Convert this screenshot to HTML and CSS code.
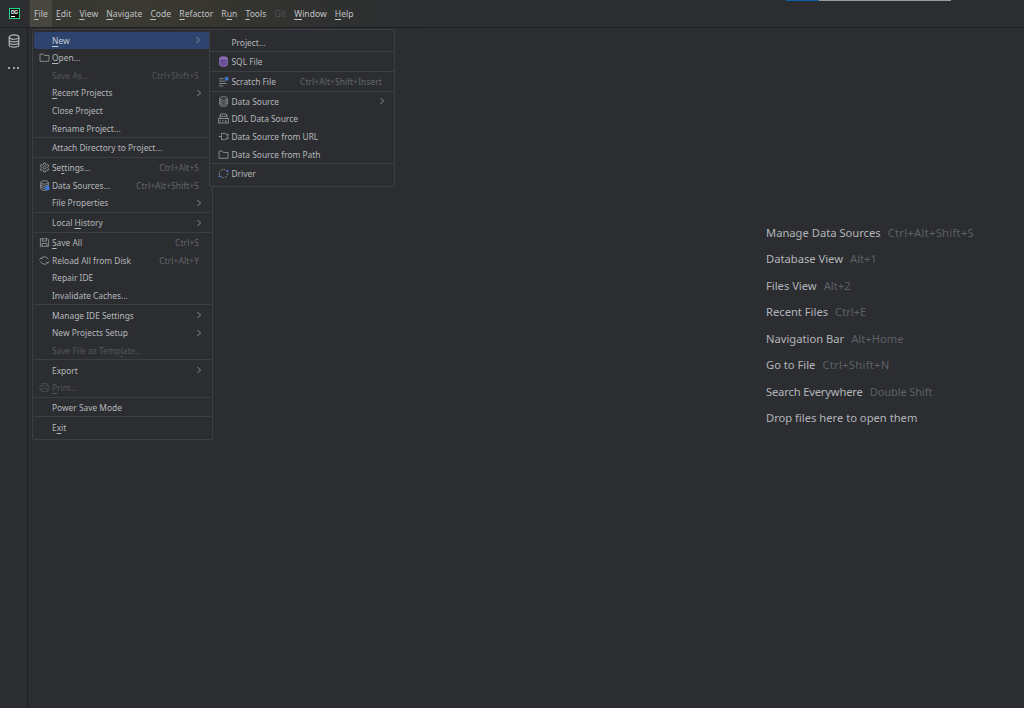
FILE: index.html
```html
<!DOCTYPE html>
<html lang="en">
<head>
<meta charset="utf-8">
<title>DataGrip</title>
<link rel="stylesheet" href="styles.css">
</head>
<body>
<div class="app">
  <header class="topbar">
    <div class="logo-cell"><div class="logo"><span class="logo-text">DG</span><span class="logo-bar"></span></div></div>
    <nav class="menubar">
      <span class="top-item active"><u>F</u>ile</span>
      <span class="top-item"><u>E</u>dit</span>
      <span class="top-item"><u>V</u>iew</span>
      <span class="top-item"><u>N</u>avigate</span>
      <span class="top-item"><u>C</u>ode</span>
      <span class="top-item"><u>R</u>efactor</span>
      <span class="top-item">R<u>u</u>n</span>
      <span class="top-item"><u>T</u>ools</span>
      <span class="top-item dim">Git</span>
      <span class="top-item"><u>W</u>indow</span>
      <span class="top-item"><u>H</u>elp</span>
    </nav>
  </header>
  <div class="body">
    <aside class="sidebar">
      <svg class="side-icon" viewBox="0 0 16 16" width="14" height="14"><use href="#db"/></svg>
      <div class="dots"><i></i><i></i><i></i></div>
    </aside>
    <main class="editor">
      <ul class="hints">
        <li>Manage Data Sources<span class="wide">Ctrl+Alt+Shift+S</span></li>
        <li>Database View<span>Alt+1</span></li>
        <li>Files View<span>Alt+2</span></li>
        <li>Recent Files<span>Ctrl+E</span></li>
        <li>Navigation Bar<span>Alt+Home</span></li>
        <li>Go to File<span class="wide">Ctrl+Shift+N</span></li>
        <li class="tight">Search Everywhere<span>Double Shift</span></li>
        <li>Drop files here to open them</li>
      </ul>
    </main>
  </div>

  <div class="menu file-menu">
    <div class="row selected"><span class="label"><u>N</u>ew</span><svg class="arrow" viewBox="0 0 6 8"><path d="M1.5 1 4.5 4 1.5 7"/></svg></div>
    <div class="row"><svg class="ico" viewBox="0 0 16 16"><use href="#folder"/></svg><span class="label"><u>O</u>pen...</span></div>
    <div class="row off"><span class="label">Save As...</span><span class="key">Ctrl+Shift+S</span></div>
    <div class="row"><span class="label"><u>R</u>ecent Projects</span><svg class="arrow" viewBox="0 0 6 8"><path d="M1.5 1 4.5 4 1.5 7"/></svg></div>
    <div class="row"><span class="label">Close Project</span></div>
    <div class="row"><span class="label">Rename Project...</span></div>
    <hr>
    <div class="row"><span class="label">Attach Directory to Project...</span></div>
    <hr>
    <div class="row"><svg class="ico" viewBox="0 0 16 16"><circle cx="8" cy="8" r="2.2"/><path d="M6.8 1.5h2.4l.4 2 1.6.9 1.9-.7 1.2 2.1-1.5 1.3v1.8l1.5 1.3-1.2 2.1-1.9-.7-1.6.9-.4 2H6.8l-.4-2-1.6-.9-1.9.7-1.2-2.1 1.5-1.3V7.1L1.7 5.8l1.2-2.1 1.9.7 1.6-.9z"/></svg><span class="label">Se<u>t</u>tings...</span><span class="key">Ctrl+Alt+S</span></div>
    <div class="row"><svg class="ico" viewBox="0 0 16 16"><use href="#db"/><circle class="fill-blue" cx="12" cy="12" r="3.5"/></svg><span class="label">Data Sources...</span><span class="key">Ctrl+Alt+Shift+S</span></div>
    <div class="row"><span class="label">File Properties</span><svg class="arrow" viewBox="0 0 6 8"><path d="M1.5 1 4.5 4 1.5 7"/></svg></div>
    <hr>
    <div class="row"><span class="label">Local <u>H</u>istory</span><svg class="arrow" viewBox="0 0 6 8"><path d="M1.5 1 4.5 4 1.5 7"/></svg></div>
    <hr>
    <div class="row"><svg class="ico" viewBox="0 0 16 16"><path d="M2 2.5h10.5l1.5 1.5v9.5H2z"/><path d="M5 2.5v3.5h6V2.5M4.5 13.5V9.5h7v4"/></svg><span class="label"><u>S</u>ave All</span><span class="key">Ctrl+S</span></div>
    <div class="row"><svg class="ico" viewBox="0 0 16 16"><path d="M13.5 6.5A6 6 0 0 0 3 5M2.500 9.500A6 6 0 0 0 13 11"/><path d="M.5 7l2.200-2.500L5.500 6M15.500 9l-2.200 2.500L10.500 10"/></svg><span class="label">Reload All from Disk</span><span class="key">Ctrl+Alt+Y</span></div>
    <div class="row"><span class="label">Repair IDE</span></div>
    <div class="row"><span class="label">Invalidate Caches...</span></div>
    <hr>
    <div class="row"><span class="label">Manage IDE Settings</span><svg class="arrow" viewBox="0 0 6 8"><path d="M1.5 1 4.5 4 1.5 7"/></svg></div>
    <div class="row"><span class="label">New Projects Setup</span><svg class="arrow" viewBox="0 0 6 8"><path d="M1.5 1 4.5 4 1.5 7"/></svg></div>
    <div class="row off"><span class="label">Save File as Temp<u>l</u>ate...</span></div>
    <hr>
    <div class="row"><span class="label">Export</span><svg class="arrow" viewBox="0 0 6 8"><path d="M1.5 1 4.5 4 1.5 7"/></svg></div>
    <div class="row off"><svg class="ico" viewBox="0 0 16 16"><path d="M4 5.500V2h8v3.500M4 12H1.500V5.500h13V12H12M4 9.500h8V14H4z"/></svg><span class="label"><u>P</u>rint...</span></div>
    <hr>
    <div class="row"><span class="label">Power Save Mode</span></div>
    <hr>
    <div class="row"><span class="label">E<u>x</u>it</span></div>
  </div>

  <div class="menu new-menu">
    <div class="row"><span class="label">Project...</span></div>
    <hr>
    <div class="row"><svg class="ico purple" viewBox="0 0 16 16"><use href="#db-fill"/></svg><span class="label">SQL File</span></div>
    <hr>
    <div class="row"><svg class="ico" viewBox="0 0 16 16"><path d="M1.500 4h7M1.500 7.500h9M1.500 11h11M1.500 14.500h6"/><circle class="fill-blue" cx="12.500" cy="4" r="3"/></svg><span class="label">Scratch File</span><span class="key">Ctrl+Alt+Shift+Insert</span></div>
    <hr>
    <div class="row"><svg class="ico" viewBox="0 0 16 16"><use href="#db"/></svg><span class="label">Data Source</span><svg class="arrow" viewBox="0 0 6 8"><path d="M1.5 1 4.5 4 1.5 7"/></svg></div>
    <div class="row"><svg class="ico" viewBox="0 0 16 16"><ellipse cx="8" cy="3" rx="5" ry="2"/><path d="M3 3v5M13 3v5M.5 8h15v6.500H.5zM3 10v2.500M7 10v2.500M11 10v2.500h2"/></svg><span class="label">DDL Data Source</span></div>
    <div class="row"><svg class="ico" viewBox="0 0 16 16"><path d="M5 3.500h4.500a4.500 4.500 0 0 1 0 9H5zM1 8h4M13.500 5.500H16M13.500 10.500H16"/></svg><span class="label">Data Source from URL</span></div>
    <div class="row"><svg class="ico" viewBox="0 0 16 16"><use href="#folder"/></svg><span class="label">Data Source from Path</span></div>
    <hr>
    <div class="row"><svg class="ico" viewBox="0 0 16 16"><circle class="dash" cx="8" cy="8" r="6"/><circle class="fill-blue" cx="2" cy="12" r="1.500"/><circle class="fill-blue" cx="14" cy="4" r="1.500"/></svg><span class="label">Driver</span></div>
  </div>

  <div class="top-strip"><i></i></div>

  <svg class="defs" width="0" height="0">
    <defs>
      <g id="db"><ellipse cx="8" cy="3.500" rx="5.500" ry="2.500"/><path d="M2.500 3.500v9c0 1.400 2.500 2.500 5.500 2.500s5.500-1.100 5.500-2.500v-9M2.500 6.500c0 1.400 2.500 2.500 5.500 2.500s5.500-1.100 5.500-2.500M2.500 9.500c0 1.400 2.500 2.500 5.500 2.500s5.500-1.100 5.500-2.500"/></g>
      <g id="db-fill"><ellipse cx="8" cy="3.500" rx="5.500" ry="2.500"/><path d="M2.500 3.500v9c0 1.400 2.500 2.500 5.500 2.500s5.500-1.100 5.500-2.500v-9z"/></g>
      <path id="folder" d="M1.500 3h4.500l1.800 2h6.700v8.500h-13z"/>
    </defs>
  </svg>
</div>
</body>
</html>
```
FILE: styles.css
```css
* { box-sizing: border-box; }
html, body { margin: 0; height: 100%; }
body { background: #2b2d30; overflow: hidden; font-family: "Noto Sans", "Open Sans", sans-serif; }
.app { position: relative; width: 1024px; height: 708px; display: flex; flex-direction: column; color: #bcbec4; }

.topbar { height: 28px; display: flex; background: linear-gradient(90deg, #34352f 0, #3a3a33 12%, #37362f 20%, #2f3030 32%, #2b2d30 45%); border-bottom: 1px solid #1e1f22; }
.logo-cell { width: 29px; display: flex; align-items: center; justify-content: center; background: #2b2d30; }
.logo { width: 11px; height: 11px; margin-top: -1px; background: #0c0c0c; border: 1px solid #21d789; display: flex; flex-direction: column; padding: 1px 1px 0; }
.logo-text { font: 700 5px/5px "Liberation Sans", sans-serif; color: #fff; letter-spacing: -.3px; }
.logo-bar { width: 4px; height: 1px; background: #fff; margin-top: 1px; }
.menubar { display: flex; font-size: 8.600px; line-height: 26px; margin-left: 1px; }
.top-item { padding: 1px 4.050px 0; white-space: nowrap; color: #c0c2c6; }
.top-item.active { background: #47473f; }
.top-item.dim { color: #55575b; }

.body { flex: 1; display: flex; min-height: 0; }
.sidebar { width: 28px; border-right: 1px solid #1e1f22; display: flex; flex-direction: column; align-items: center; padding-top: 6px; gap: 19px; }
.side-icon { fill: none; stroke: #b4b6bb; stroke-width: 1.300; }
.dots { display: flex; gap: 2.500px; }
.dots i { width: 2px; height: 2px; border-radius: 50%; background: #c5c7cb; }

.editor { flex: 1; padding: 192px 0 0 738px; }
.hints { list-style: none; margin: 0; padding: 0; font-size: 11.200px; line-height: 26.450px; color: #b3b5ba; white-space: nowrap; }
.hints span { margin-left: 7px; color: #5d6066; }
.hints .wide { letter-spacing: .28px; }
.hints .tight { letter-spacing: -.17px; }

.menu { position: absolute; background: #2b2d30; border: 1px solid #3c3e43; border-radius: 2px; font-size: 8.400px; line-height: 17.600px; color: #b6b8bd; }
.file-menu { left: 32px; top: 29px; width: 181px; height: 411px; padding: 1.700px 1px; }
.new-menu { left: 209px; top: 29px; width: 186px; height: 158px; padding: 3.500px 0 0; }
.menu hr { border: 0; border-top: 1px solid #3c3e43; height: 2.200px; margin: 0; }
.row { position: relative; height: 17.600px; padding: 0 12px 0 18px; display: flex; justify-content: space-between; white-space: nowrap; }
.new-menu .row { padding-left: 21.500px; }
.row.selected { background: #2e436e; border-radius: 3px; color: #c8cbd2; margin-right: 1px; }
.row.off, .row.off .key { color: #55575c; }
.key { color: #64676d; margin-left: auto; letter-spacing: .1px; }
.arrow { width: 6px; height: 8px; margin: 4.500px -3px 0 auto; fill: none; stroke: #8a8c91; stroke-width: 1; }
.ico { position: absolute; left: 5px; top: 3px; width: 11px; height: 11px; fill: none; stroke: #a3a5aa; stroke-width: 1.100; }
.new-menu .ico { left: 8px; }
.ico.purple { fill: #6b4f96; stroke: #a88bd3; }
.row.off .ico { stroke: #4f5156; }
.fill-blue { fill: #3d74c9; stroke: none; }
.dash { stroke-dasharray: 2.500 1.500; }
u { text-underline-offset: 1.500px; text-decoration-thickness: 1px; }

.top-strip { position: absolute; left: 786px; top: 0; width: 165px; height: 1px; background: #9a9b9d; }
.top-strip i { display: block; width: 33px; height: 1px; background: #0f5ea6; }
.defs { position: absolute; }
```
